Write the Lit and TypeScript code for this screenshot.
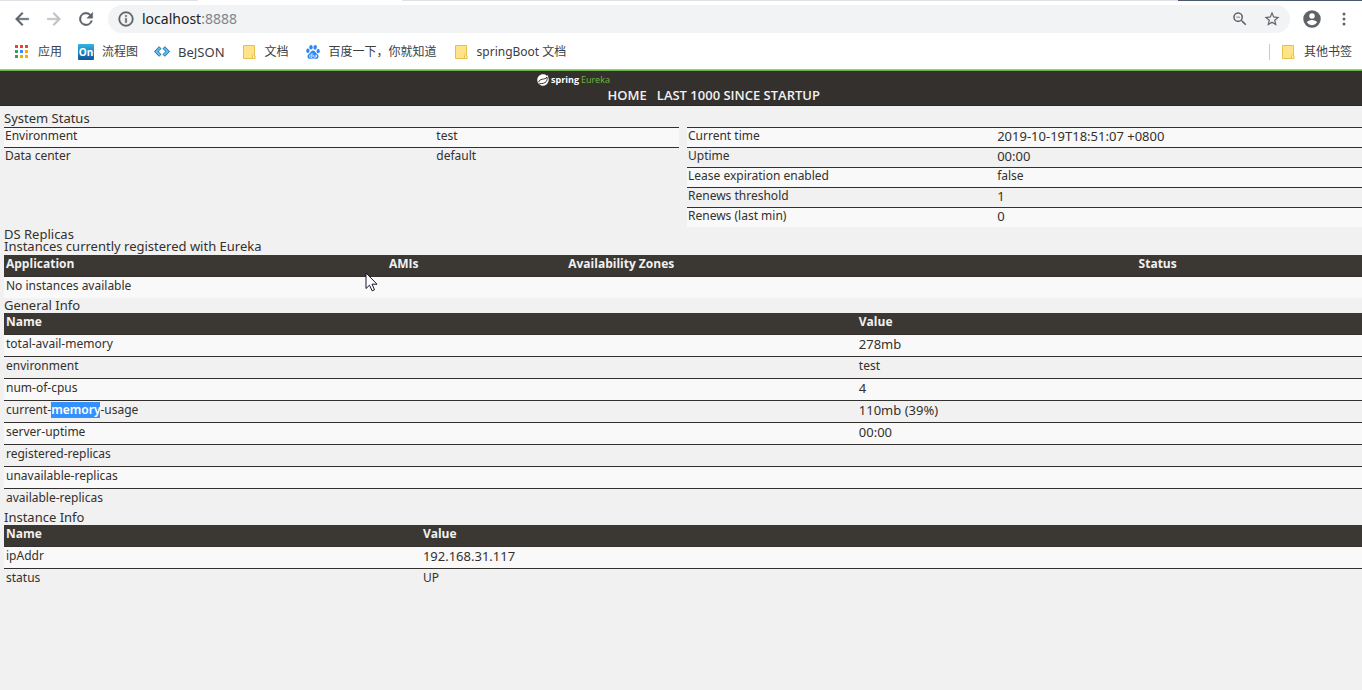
import { LitElement, html, css, svg, nothing } from "lit";
import { customElement, property } from "lit/decorators.js";

const folderIcon = html`<svg class="icon" viewBox="0 0 16 16" aria-hidden="true">
  <path d="M2.500 1.500h11v10l.5 3H2.500z" fill="#ffe38a" stroke="#e6c24c" />
  <path d="M11.500 14.500v-3l1-1.500 1.500 2v2.500z" fill="#fff0b8" stroke="#e6c24c" />
</svg>`;

const appsColors = ["#ea4335", "#ea4335", "#ea4335", "#34a065", "#4285f4", "#f9ab00", "#34a065", "#f9ab00", "#f9ab00"];
const appsIcon = html`<svg class="icon" viewBox="0 0 16 16" aria-hidden="true">
  ${appsColors.map((c, i) => svg`<rect x=${1 + (i % 3) * 5} y=${1 + Math.floor(i / 3) * 5} width="3" height="3" fill=${c} />`)}
</svg>`;

const onIcon = html`<svg class="icon" viewBox="0 0 16 16" aria-hidden="true">
  <defs><linearGradient id="on" x1="0" y1="0" x2="0" y2="1">
    <stop offset="0" stop-color="#35b4e0" /><stop offset="0.500" stop-color="#1a86c4" /><stop offset="1" stop-color="#14549a" />
  </linearGradient></defs>
  <rect width="16" height="16" rx="1" fill="url(#on)" />
  <text x="8" y="12" text-anchor="middle" font-family="Open Sans, sans-serif" font-weight="700" font-size="10" fill="#fff">On</text>
</svg>`;

const jsonIcon = html`<svg class="icon" viewBox="0 0 16 16" aria-hidden="true">
  <g fill="none" stroke-linejoin="miter">
    <path d="M6.300 3.300L2.300 7.500l4 4.200M9.700 3.300l4 4.200-4 4.200" stroke="#1f74a8" stroke-width="3.400" />
    <path d="M5.900 3.800L2.400 7.500l3.500 3.700M10.100 3.800l3.500 3.700-3.500 3.700" stroke="#6cc0ea" stroke-width="1.800" />
  </g>
</svg>`;

const pawIcon = html`<svg class="icon" viewBox="0 0 16 16" aria-hidden="true">
  <g fill="#2f86f6">
    <ellipse cx="2.900" cy="6.800" rx="1.700" ry="2.200" />
    <ellipse cx="6" cy="3.200" rx="1.700" ry="2.300" />
    <ellipse cx="10.200" cy="3.300" rx="1.700" ry="2.300" transform="rotate(12 10 3)" />
    <ellipse cx="13.200" cy="7.200" rx="1.600" ry="2.100" />
    <path d="M8 6.500c1.700 0 2.200 1.600 3.400 2.700 1.300 1.100 2.400 2 2.100 3.700-.4 2-2.300 1.900-3.200 1.800-1.500-.2-2.700-.2-4.300 0-1.300.2-3.300.1-3.500-2-.2-1.700 1-2.500 2.200-3.500C5.900 8.200 6.300 6.500 8 6.500z" />
  </g>
  <path d="M7 9v4.300H5.600c-1.500 0-1.500-2.300 0-2.300H7M8.700 10.800v1.700c0 1 2.500 1 2.500 0v-1.700 2.500" fill="none" stroke="#fff" stroke-width=".8" />
</svg>`;

interface Bookmark { label: string; icon: unknown }

const bookmarks: Bookmark[] = [
  { label: "应用", icon: appsIcon },
  { label: "流程图", icon: onIcon },
  { label: "BeJSON", icon: jsonIcon },
  { label: "文档", icon: folderIcon },
  { label: "百度一下，你就知道", icon: pawIcon },
  { label: "springBoot 文档", icon: folderIcon },
];

@customElement("browser-bar")
class BrowserBar extends LitElement {
  static styles = css`
    :host { display: block; background: #fff; font-family: "Noto Sans", "Noto Sans CJK SC", sans-serif; color: #3c4043; border-bottom: 1px solid #b4b4b4; }
    .tabs { display: flex; height: 1px; background: #dee1e6; }
    .tab-gap { flex: 198; }
    .tab-active { flex: 204; background: #fff; }
    .tab-rest { flex: 776; }
    .tab-frame { flex: 184; background: #4a5a6c; }
    .toolbar { display: flex; align-items: center; height: 36px; padding: 0 2px 0 6px; }
    .tool { display: flex; align-items: center; justify-content: center; width: 32px; height: 28px; padding: 0; border: 0; background: none; color: #5f6368; }
    .tool[disabled] { color: #bdbfc2; }
    .glyph { display: block; width: 20px; height: 20px; fill: currentColor; }
    .glyph-small { width: 18px; height: 18px; }
    .address { display: flex; align-items: center; flex: 1; height: 28px; margin: 0 6px; padding: 0 2px 0 9px; border-radius: 14px; background: #f1f3f4; }
    .info { display: block; width: 18px; height: 18px; margin-right: 7px; fill: #5f6368; }
    .url { display: flex; flex: 1; align-items: center; font-size: 14px; line-height: 20px; color: #80868b; }
    .host { field-sizing: content; font: inherit; color: #202124; border: 0; padding: 0; background: none; outline: 0; }
    .bookmarks { display: flex; align-items: center; gap: 16px; height: 29px; padding: 0 10px 3px 14px; }
    .bookmark { display: flex; align-items: center; gap: 8px; font-size: 12px; line-height: 16px; color: #3c4043; text-decoration: none; white-space: nowrap; }
    .latin { font-size: 13px; }
    .icon { display: block; width: 16px; height: 16px; }
    .other { margin-left: auto; padding-left: 10px; border-left: 1px solid #c8cacd; }
  `;

  render() {
    return html`
      <div class="tabs"><span class="tab-gap"></span><span class="tab-active"></span><span class="tab-rest"></span><span class="tab-frame"></span></div>
      <div class="toolbar">
        <button class="tool" aria-label="Back"><svg class="glyph" viewBox="0 0 24 24"><path d="M20 11H7.830l5.590-5.590L12 4l-8 8 8 8 1.410-1.410L7.830 13H20z" stroke="currentColor" stroke-width=".5" /></svg></button>
        <button class="tool" aria-label="Forward" disabled><svg class="glyph" viewBox="0 0 24 24"><path d="M12 4l-1.410 1.410L16.170 11H4v2h12.170l-5.580 5.590L12 20l8-8z" stroke="currentColor" stroke-width=".5" /></svg></button>
        <button class="tool" aria-label="Reload"><svg class="glyph" viewBox="0 0 24 24"><path d="M17.650 6.350A8 8 0 1 0 19.730 14h-2.080A6 6 0 1 1 12 6c1.660 0 3.140.69 4.220 1.780L13 11h7V4z" stroke="currentColor" stroke-width=".5" /></svg></button>
        <div class="address">
          <svg class="info" viewBox="0 0 24 24"><path d="M11 17h2v-6h-2zM12 2a10 10 0 1 0 0 20 10 10 0 0 0 0-20zm0 18a8 8 0 1 1 0-16 8 8 0 0 1 0 16zM11 9h2V7h-2z" stroke="#5f6368" stroke-width=".4" /></svg>
          <label class="url"><input class="host" type="text" aria-label="Address" .value=${"localhost"} /><span>:8888</span></label>
          <button class="tool" aria-label="Zoom"><svg class="glyph glyph-small" viewBox="0 0 24 24"><path d="M15.500 14h-.79l-.28-.27a6.500 6.500 0 1 0-.7.700l.27.280v.79l5 4.990L20.490 19zm-6 0a4.500 4.500 0 1 1 0-9 4.500 4.500 0 0 1 0 9zM7 9h5v1H7z" /></svg></button>
          <button class="tool" aria-label="Bookmark this page"><svg class="glyph glyph-small" viewBox="0 0 24 24"><path d="M22 9.240l-7.190-.62L12 2 9.190 8.630 2 9.240l5.460 4.730L5.820 21 12 17.270 18.180 21l-1.630-7.030zM12 15.400l-3.760 2.270 1-4.280-3.320-2.880 4.380-.38L12 6.100l1.710 4.040 4.380.38-3.320 2.880 1 4.280z" /></svg></button>
        </div>
        <button class="tool" aria-label="Profile"><svg class="glyph" viewBox="0 0 24 24"><path d="M12 1.500a10.500 10.500 0 1 0 0 21 10.500 10.500 0 0 0 0-21zM12 5a3.300 3.300 0 1 1 0 6.600A3.300 3.300 0 0 1 12 5zm0 14.500a7.500 7.500 0 0 1-6-3.200c0-2 4-3.100 6-3.100s6 1.100 6 3.100a7.500 7.500 0 0 1-6 3.200z" /></svg></button>
        <button class="tool" aria-label="Menu"><svg class="glyph" viewBox="0 0 24 24"><circle cx="12" cy="6" r="1.800" /><circle cx="12" cy="12" r="1.800" /><circle cx="12" cy="18" r="1.800" /></svg></button>
      </div>
      <nav class="bookmarks">
        ${bookmarks.map((b) => html`<a class="bookmark ${/^[\w ]+$/.test(b.label) ? "latin" : ""}" href="#">${b.icon}<span>${b.label}</span></a>`)}
        <a class="bookmark other" href="#">${folderIcon}<span>其他书签</span></a>
      </nav>
    `;
  }
}

@customElement("info-table")
class InfoTable extends LitElement {
  @property() label = "";
  @property({ type: Array }) heads: string[] = [];
  @property({ type: Array }) rows: string[][] = [];
  @property({ type: Array }) widths: number[] = [];
  @property() marked = "";

  static styles = css`
    :host { display: block; font-family: "Noto Sans", sans-serif; color: #34302d; }
    .table { width: 100%; table-layout: fixed; border-collapse: separate; border-spacing: 0; font-size: 12px; line-height: 16px; }
    .cell { padding: 1px 2px 4px; border-top: 1px solid #34302d; text-align: left; font-weight: 400; height: 16px; white-space: nowrap; vertical-align: top; }
    .row:nth-child(odd) .cell { background: #f9f9f9; }
    .head { padding: 1px 2px 4px; background: #3b3834; color: #f1f1f1; font-family: "Open Sans", sans-serif; font-weight: 700; text-align: left; }
    .plain .cell { padding: 0 1px 3px; }
    .numeric { font-size: 13px; }
    .marked { display: inline-block; background: #3390ff; color: #fff; font-weight: 600; }
  `;

  private text(value: string) {
    const at = this.marked ? value.indexOf("-" + this.marked + "-") : -1;
    if (at < 0) return value;
    const end = at + 1 + this.marked.length;
    return html`${value.slice(0, at + 1)}<mark class="marked">${this.marked}</mark>${value.slice(end)}`;
  }

  render() {
    return html`<table class="table ${this.heads.length ? "" : "plain"}" aria-label=${this.label}>
      <colgroup>${this.widths.map((w) => html`<col style="width:${w}%" />`)}</colgroup>
      ${this.heads.length ? html`<thead><tr>${this.heads.map((h) => html`<th class="head" scope="col">${h}</th>`)}</tr></thead>` : nothing}
      <tbody>
        ${this.rows.map((r) => html`<tr class="row">${r.map((c) => html`<td class="cell ${/^\d/.test(c) ? "numeric" : ""}" colspan=${r.length === 1 ? this.widths.length : 1}>${this.text(c)}</td>`)}</tr>`)}
      </tbody>
    </table>`;
  }
}

@customElement("app-root")
class AppRoot extends LitElement {
  static styles = css`
    :host { display: flex; flex-direction: column; min-height: 100vh; background: #f1f1f1; color: #34302d; font-family: "Noto Sans", sans-serif; overflow-x: hidden; }
    .header { display: flex; justify-content: center; border-top: 1px solid #6db33f; border-bottom: 1px solid #2b2725; background: #34302d; }
    .inner { display: flex; flex-direction: column; width: 288px; height: 34px; }
    .logo { display: flex; align-items: center; gap: 2px; height: 13px; padding-top: 2px; font-family: "Open Sans", sans-serif; font-size: 9px; line-height: 13px; color: #fff; text-decoration: none; }
    .leaf { display: block; width: 12px; height: 12px; }
    .spring { font-weight: 700; }
    .eureka { color: #6db33f; font-family: "Noto Sans", sans-serif; }
    .nav { display: flex; justify-content: flex-end; }
    .link { padding: 0 5px; color: #f1f1f1; font-family: "Open Sans", sans-serif; font-size: 13px; line-height: 18px; font-weight: 600; text-decoration: none; white-space: nowrap; }
    .main { padding: 5px 0 0 4px; }
    .title { margin: 0; padding: 1px 0 2px; font-size: 13px; line-height: 12px; font-weight: 400; }
    .title-top { padding-bottom: 0; }
    .title-next { padding: 0 0 3px; }
    .status { display: grid; grid-template-columns: 1fr 1fr; gap: 8px; padding-top: 1px; }
    .pointer { position: absolute; left: 365px; top: 272px; width: 13px; height: 20px; }
  `;

  render() {
    return html`
      <browser-bar></browser-bar>
      <header class="header">
        <div class="inner">
          <a class="logo" href="#">
            <svg class="leaf" viewBox="0 0 24 24" aria-hidden="true">
              <path d="M21 2c1 2.500 2.600 6 2.500 9.500C23.300 18 18 23.500 12 23.500S.5 18 .5 12 5.500.5 12 .5c3 0 5.500 1 7.300 2.800C20 3 20.500 2.600 21 2z" fill="#fff" />
              <path d="M4.500 19.500c6-.5 11-.5 14-4.500 2-2.700 2-6 1.500-9-2 3.500-6 4-9.500 4.500-4 .7-7 2.500-7 6" fill="none" stroke="#34302d" stroke-width="2" />
            </svg>
            <span class="spring">spring</span><span class="eureka">Eureka</span>
          </a>
          <nav class="nav"><a class="link" href="#">HOME</a><a class="link" href="#">LAST 1000 SINCE STARTUP</a></nav>
        </div>
      </header>
      <main class="main">
        <h1 class="title">System Status</h1>
        <div class="status">
          <info-table label="Environment" .widths=${[63.9, 36.1]} .rows=${[["Environment", "test"], ["Data center", "default"]]}></info-table>
          <info-table label="Server state" .widths=${[45.8, 54.2]} .rows=${[
            ["Current time", "2019-10-19T18:51:07 +0800"],
            ["Uptime", "00:00"],
            ["Lease expiration enabled", "false"],
            ["Renews threshold", "1"],
            ["Renews (last min)", "0"],
          ]}></info-table>
        </div>
        <h1 class="title title-top">DS Replicas</h1>
        <h1 class="title title-next">Instances currently registered with Eureka</h1>
        <info-table label="Instances" .heads=${["Application", "AMIs", "Availability Zones", "Status"]} .widths=${[28.2, 13.2, 42, 16.6]} .rows=${[["No instances available"]]}></info-table>
        <h1 class="title">General Info</h1>
        <info-table label="General Info" marked="memory" .heads=${["Name", "Value"]} .widths=${[62.8, 37.2]} .rows=${[
          ["total-avail-memory", "278mb"],
          ["environment", "test"],
          ["num-of-cpus", "4"],
          ["current-memory-usage", "110mb (39%)"],
          ["server-uptime", "00:00"],
          ["registered-replicas", ""],
          ["unavailable-replicas", ""],
          ["available-replicas", ""],
        ]}></info-table>
        <h1 class="title">Instance Info</h1>
        <info-table label="Instance Info" .heads=${["Name", "Value"]} .widths=${[30.7, 69.3]} .rows=${[["ipAddr", "192.168.31.117"], ["status", "UP"]]}></info-table>
      </main>
      <svg class="pointer" viewBox="0 0 13 20" aria-hidden="true">
        <path d="M1 1v15.500l3.500-3.300 2.600 5.600 2.400-1-2.500-5.600H12z" fill="#fff" stroke="#14142b" />
      </svg>
    `;
  }
}
